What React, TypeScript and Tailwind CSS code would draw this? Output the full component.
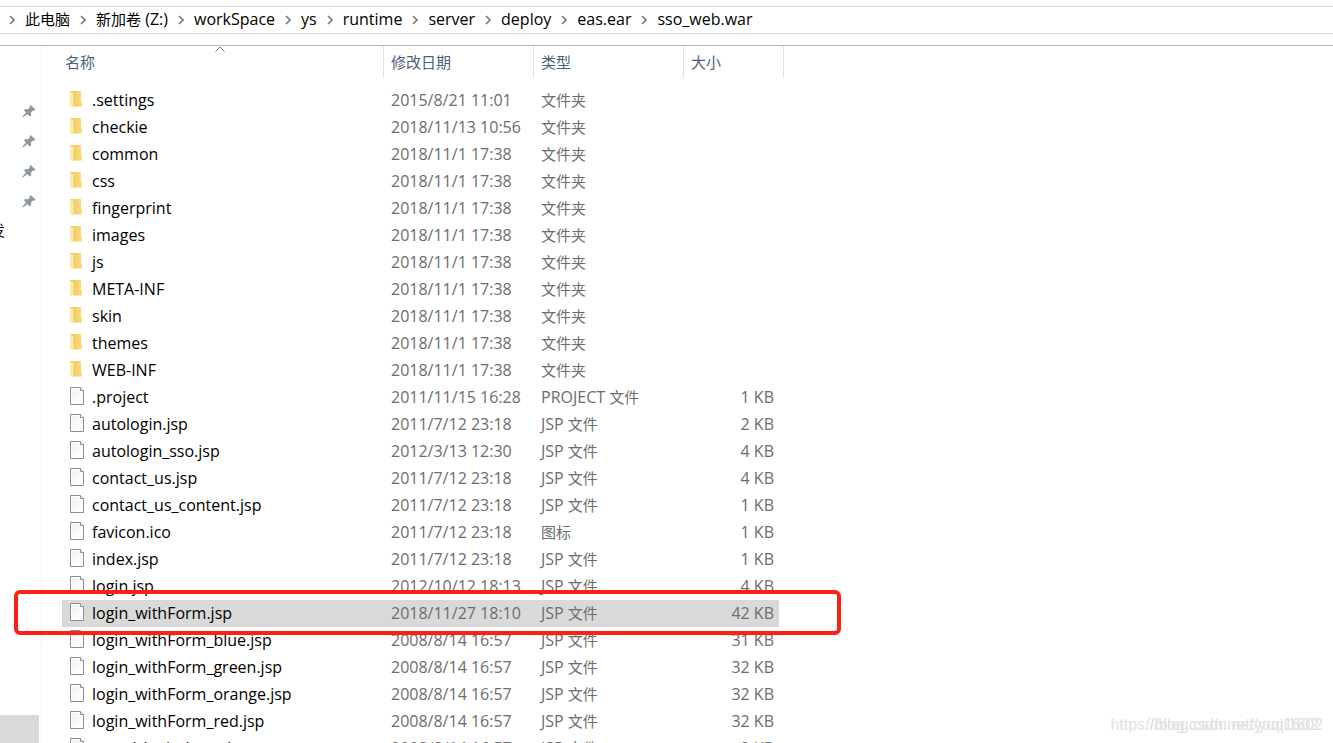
import clsx from "clsx";

type Entry = {
  name: string;
  date: string;
  kind: "folder" | "file";
  type?: string;
  size?: string;
};

const crumbs = [
  "此电脑",
  "新加卷 (Z:)",
  "workSpace",
  "ys",
  "runtime",
  "server",
  "deploy",
  "eas.ear",
  "sso_web.war",
];

const entries: Entry[] = [
  { name: ".settings", date: "2015/8/21 11:01", kind: "folder" },
  { name: "checkie", date: "2018/11/13 10:56", kind: "folder" },
  { name: "common", date: "2018/11/1 17:38", kind: "folder" },
  { name: "css", date: "2018/11/1 17:38", kind: "folder" },
  { name: "fingerprint", date: "2018/11/1 17:38", kind: "folder" },
  { name: "images", date: "2018/11/1 17:38", kind: "folder" },
  { name: "js", date: "2018/11/1 17:38", kind: "folder" },
  { name: "META-INF", date: "2018/11/1 17:38", kind: "folder" },
  { name: "skin", date: "2018/11/1 17:38", kind: "folder" },
  { name: "themes", date: "2018/11/1 17:38", kind: "folder" },
  { name: "WEB-INF", date: "2018/11/1 17:38", kind: "folder" },
  { name: ".project", date: "2011/11/15 16:28", kind: "file", type: "PROJECT 文件", size: "1 KB" },
  { name: "autologin.jsp", date: "2011/7/12 23:18", kind: "file", type: "JSP 文件", size: "2 KB" },
  { name: "autologin_sso.jsp", date: "2012/3/13 12:30", kind: "file", type: "JSP 文件", size: "4 KB" },
  { name: "contact_us.jsp", date: "2011/7/12 23:18", kind: "file", type: "JSP 文件", size: "4 KB" },
  { name: "contact_us_content.jsp", date: "2011/7/12 23:18", kind: "file", type: "JSP 文件", size: "1 KB" },
  { name: "favicon.ico", date: "2011/7/12 23:18", kind: "file", type: "图标", size: "1 KB" },
  { name: "index.jsp", date: "2011/7/12 23:18", kind: "file", type: "JSP 文件", size: "1 KB" },
  { name: "login.jsp", date: "2012/10/12 18:13", kind: "file", type: "JSP 文件", size: "4 KB" },
  { name: "login_withForm.jsp", date: "2018/11/27 18:10", kind: "file", type: "JSP 文件", size: "42 KB" },
  { name: "login_withForm_blue.jsp", date: "2008/8/14 16:57", kind: "file", type: "JSP 文件", size: "31 KB" },
  { name: "login_withForm_green.jsp", date: "2008/8/14 16:57", kind: "file", type: "JSP 文件", size: "32 KB" },
  { name: "login_withForm_orange.jsp", date: "2008/8/14 16:57", kind: "file", type: "JSP 文件", size: "32 KB" },
  { name: "login_withForm_red.jsp", date: "2008/8/14 16:57", kind: "file", type: "JSP 文件", size: "32 KB" },
  { name: "portal_logindemo.jsp", date: "2008/8/14 16:57", kind: "file", type: "JSP 文件", size: "2 KB" },
];

const selected = "login_withForm.jsp";

// Chinese runs are set one size below the Latin text
const Mixed = ({ text }: { text: string }) => (
  <>
    {text.split(/([\u4e00-\u9fff]+)/).map((part, i) =>
      i % 2 ? (
        <span key={i} className="text-[15px]">
          {part}
        </span>
      ) : (
        part
      ),
    )}
  </>
);

const Chevron = () => (
  <svg width="6" height="10" viewBox="0 0 6 10" fill="none" aria-hidden="true">
    <path d="M1 1l4 4-4 4" stroke="#7a7a7a" strokeWidth="1.6" />
  </svg>
);

const FolderIcon = () => (
  <svg width="16" height="18" viewBox="0 0 16 18" className="shrink-0" aria-hidden="true">
    <defs>
      <linearGradient id="folder" x1="0" x2="1">
        <stop offset="0" stopColor="#edc55c" />
        <stop offset="1" stopColor="#fadc80" />
      </linearGradient>
    </defs>
    <path d="M0 1h11v10l1 1v4.500H3z" fill="url(#folder)" />
    <path d="M0 1.500l3.500 1.500v15L0 16z" fill="#ffe9a6" />
  </svg>
);

const FileIcon = () => (
  <svg width="16" height="18" viewBox="0 0 16 18" className="shrink-0" aria-hidden="true">
    <defs>
      <linearGradient id="paper" x1="0" y1="0" x2="1" y2="1">
        <stop offset="0" stopColor="#f1f3f4" />
        <stop offset="1" stopColor="#ffffff" />
      </linearGradient>
    </defs>
    <path d="M.5.5h10l3 3v14H.5z" fill="#fff" stroke="#8e8e8e" />
    <path d="M2 2h8v3h2.500v11.500H2z" fill="url(#paper)" />
    <path d="M10.500.5v3h3" fill="#fff" stroke="#8e8e8e" />
  </svg>
);

const Pin = () => (
  <svg width="14" height="14" viewBox="0 0 14 14" aria-hidden="true">
    <path
      d="M8.500 1l5 4.500-1.500 1.200-1-.2-2 2 .2 2.700-1.200 1.200L5.300 9.900 1.400 13.300H.5v-.9L4 8.600 2 6.200 3.200 5l2.800.2 2-2-.5-1z"
      fill="#8c979f"
    />
  </svg>
);

export default function App() {
  return (
    <div className="relative flex h-screen flex-col overflow-hidden bg-white font-['Open_Sans','Noto_Sans_CJK_SC',sans-serif] text-base text-black">
      <nav className="mt-1.5 flex h-7 shrink-0 items-center border-y border-[#d9d9d9] pl-[9px]">
        {crumbs.map((crumb) => (
          <span key={crumb} className="flex items-center">
            <Chevron />
            <a href="#" className="px-2.5 pb-0.5 leading-6">
              <Mixed text={crumb} />
            </a>
          </span>
        ))}
      </nav>

      <div className="mt-[11px] flex min-h-0 flex-1 border-t border-[#b8b8b8]">
        <aside className="flex w-[42px] shrink-0 flex-col overflow-hidden border-r border-[#f3f3f3]">
          <div className="mt-[58px] flex flex-col gap-4 pl-[22px]">
            {[0, 1, 2, 3].map((n) => (
              <Pin key={n} />
            ))}
          </div>
          <span className="mt-2.5 -ml-2.5 text-[15px] leading-6">发</span>
          <div className="mt-auto mr-0.5 h-7 bg-[#d9d9d9]" />
        </aside>

        <main className="min-w-0 flex-1 overflow-hidden pl-5">
          <table className="w-[722px] table-fixed border-separate border-spacing-0 text-[#6d6d6d]">
            <colgroup>
              <col className="w-[322px]" />
              <col className="w-[150px]" />
              <col className="w-[150px]" />
              <col className="w-[100px]" />
            </colgroup>
            <thead>
              <tr className="h-8 text-left text-[15px] text-[#4c607a]">
                <th className="relative border-r border-[#e2e2e2] p-0 pl-[3px] font-normal">
                  <svg width="10" height="6" viewBox="0 0 10 6" fill="none" className="absolute top-0 left-[153px]" aria-hidden="true">
                    <path d="M.5 5.500L5 1l4.500 4.500" stroke="#6d6d6d" />
                  </svg>
                  名称
                </th>
                <th className="border-r border-[#e2e2e2] p-0 pl-[7px] font-normal">修改日期</th>
                <th className="border-r border-[#e2e2e2] p-0 pl-[7px] font-normal">类型</th>
                <th className="border-r border-[#e2e2e2] p-0 pl-[7px] font-normal">大小</th>
              </tr>
              <tr className="h-[9px]" />
            </thead>
            <tbody>
              {entries.map((entry) => {
                const fill = entry.name === selected && "bg-[#d9d9d9]";
                return (
                  <tr key={entry.name} className="h-[27px] leading-[27px] whitespace-nowrap">
                    <td className={clsx("p-0 pl-2 text-black", fill)}>
                      <div className="flex h-[27px] items-start gap-1.5">
                        <span className="flex h-6 items-center">
                          {entry.kind === "folder" ? <FolderIcon /> : <FileIcon />}
                        </span>
                        {entry.name}
                      </div>
                    </td>
                    <td className={clsx("p-0 pl-[7px]", fill)}>{entry.date}</td>
                    <td className={clsx("p-0 pl-[7px]", fill)}>
                      <div className="h-[27px]">
                        <Mixed text={entry.type ?? "文件夹"} />
                      </div>
                    </td>
                    <td className="p-0 pr-[5px] text-right">
                      <div className={clsx("h-[27px] pr-[5px]", fill)}>{entry.size}</div>
                    </td>
                  </tr>
                );
              })}
            </tbody>
          </table>
        </main>
      </div>

      {/* highlight around the selected file */}
      <div className="pointer-events-none absolute top-[590px] left-[14px] h-[45px] w-[827px] rounded-md border-4 border-[#fc2015]" />

      <div className="absolute right-2.5 bottom-2 grid justify-items-end font-['Liberation_Sans',sans-serif] text-base leading-5 text-[#e2e2e2]">
        <span className="col-start-1 row-start-1">https://blog.csdn.net/yuqi1602</span>
        <span className="col-start-1 row-start-1 pr-1" aria-hidden="true">
          //blog.csdn.net/yuqi1602
        </span>
      </div>
    </div>
  );
}
